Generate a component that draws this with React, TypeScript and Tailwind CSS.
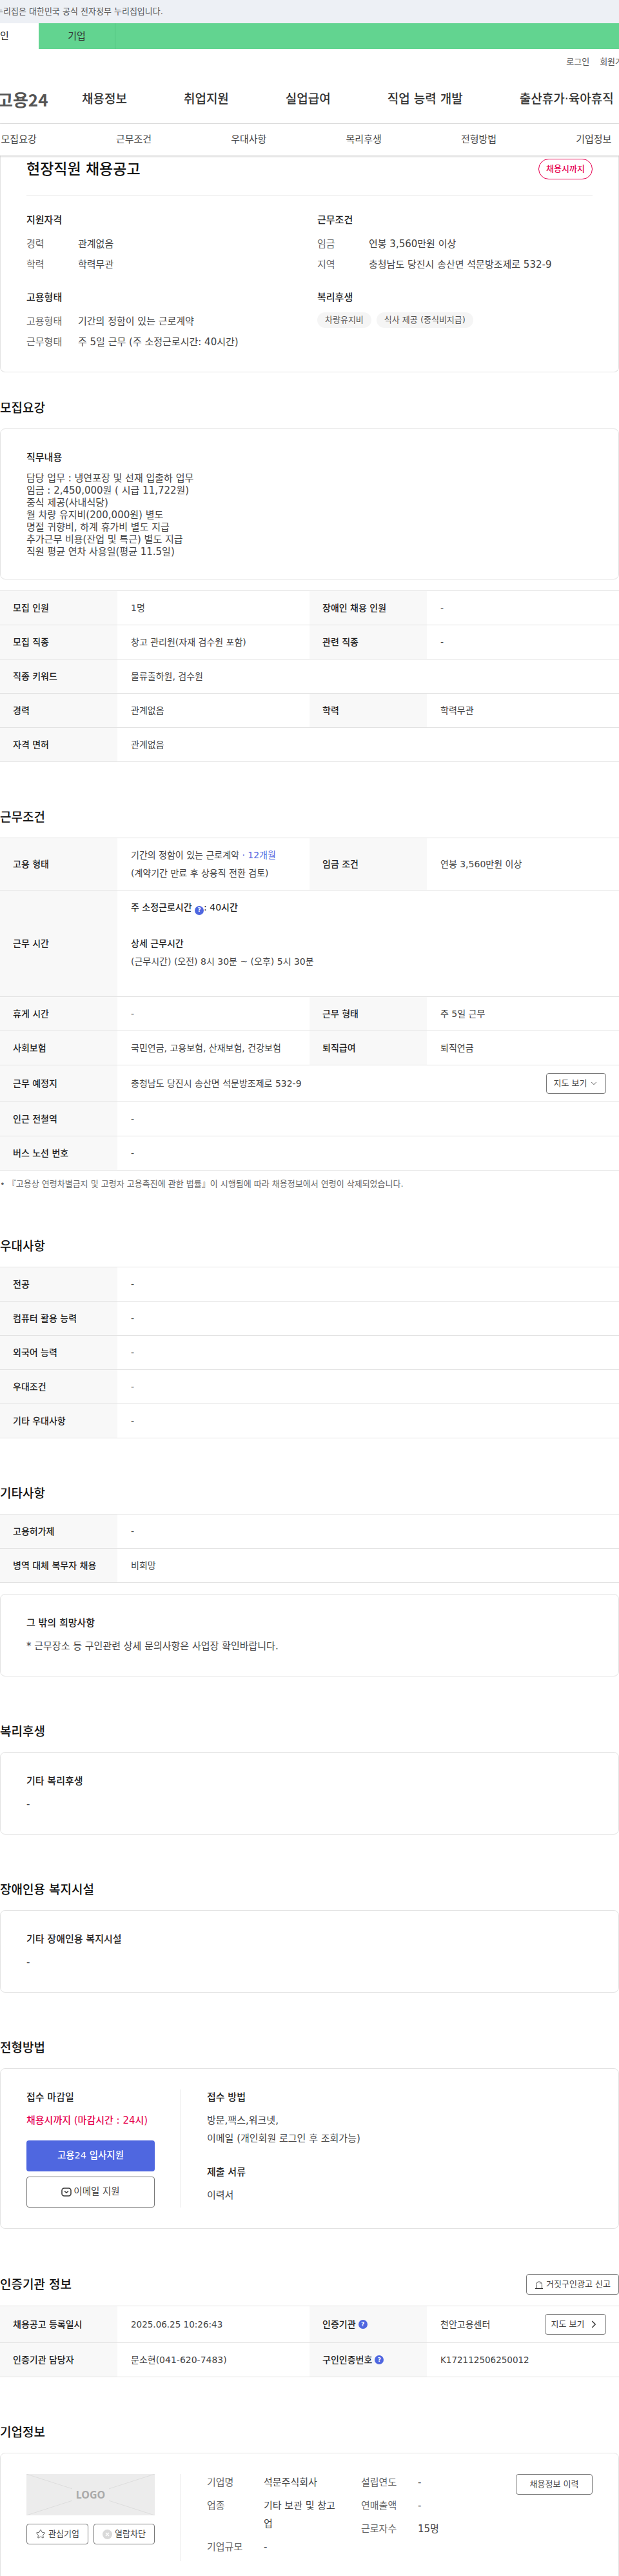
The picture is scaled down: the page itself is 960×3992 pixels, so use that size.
import { ChevronDown, ChevronRight, Star } from 'lucide-react';
import type { ReactNode } from 'react';

const tabs = ['모집요강', '근무조건', '우대사항', '복리후생', '전형방법', '기업정보'];
const gnb = ['채용정보', '취업지원', '실업급여', '직업 능력 개발', '출산휴가·육아휴직'];

type Cell = [ReactNode, ReactNode];

const Help = () => (
  <span className="w-[14px] h-[14px] inline-flex items-center justify-center rounded-full bg-[#4f67e0] text-white text-[9px] leading-none align-[-2px] font-bold">?</span>
);

const Heading = ({ children }: { children: ReactNode }) => (
  <h2 className="text-[19px] leading-[28px] font-medium text-[#111] mb-[18px]">{children}</h2>
);

const Box = ({ children, className = '' }: { children: ReactNode; className?: string }) => (
  <div className={`border border-[#e2e2e2] rounded-lg px-10 py-8 ${className}`}>{children}</div>
);

const BoxBlock = ({ title, text }: { title: string; text: string }) => (
  <Box>
    <h3 className="text-[15px] leading-6 font-medium text-[#222] mb-[10px]">{title}</h3>
    <p className="text-[15px] leading-7 text-[#444]">{text}</p>
  </Box>
);

const Label = ({ children }: { children: ReactNode }) => (
  <div className="w-[182px] shrink-0 bg-[#f8f8f8] pl-5 pr-2 flex items-center gap-1 text-[14px] font-medium text-[#222]">{children}</div>
);

const Value = ({ children }: { children: ReactNode }) => (
  <div className="flex-1 pl-[21px] pr-5 py-3 flex items-center text-[14px] leading-7 text-[#444]">
    <div className="w-full">{children}</div>
  </div>
);

// one table row, with one or two label/value pairs
const Row = ({ cells }: { cells: Cell[] }) => (
  <div className="flex border-b border-[#e2e2e2]">
    {cells.length === 1 ? (
      <>
        <Label>{cells[0][0]}</Label>
        <Value>{cells[0][1]}</Value>
      </>
    ) : (
      cells.map(([label, value], i) => (
        <div key={i} className="flex w-[480px]">
          <Label>{label}</Label>
          <Value>{value}</Value>
        </div>
      ))
    )}
  </div>
);

const Table = ({ children }: { children: ReactNode }) => (
  <div className="border-t border-[#e2e2e2]">{children}</div>
);

const SmallButton = ({ children, className = '' }: { children: ReactNode; className?: string }) => (
  <button className={`h-8 border border-[#777] rounded-[4px] inline-flex items-center justify-center text-[13px] text-[#444] bg-white shrink-0 ${className}`}>{children}</button>
);

const Info = ({ label, value }: { label: string; value: string }) => (
  <div className="flex h-6 items-center text-[15px] whitespace-nowrap">
    <span className="w-[80px] text-[#666]">{label}</span>
    <span className="text-[#444]">{value}</span>
  </div>
);

const CompanyInfo = ({ label, value, width }: { label: string; value: string; width: string }) => (
  <div className="flex text-[15px] leading-[28px] mb-2">
    <span className="w-[88px] shrink-0 text-[#666]">{label}</span>
    <span className={`${width} text-[#444]`}>{value}</span>
  </div>
);

export default function App() {
  return (
    <div className="w-[960px] overflow-hidden bg-white font-['DejaVu_Sans','Noto_Sans_CJK_KR',sans-serif] text-[#444]">
      {/* government banner */}
      <div className="h-9 bg-[#edf0f5] flex items-center text-[13px] text-[#555]">
        <span className="-ml-[7px] whitespace-nowrap">누리집은 대한민국 공식 전자정부 누리집입니다.</span>
      </div>

      {/* user type tabs */}
      <div className="h-10 bg-[#62d490] flex -ml-[60px] text-[15px]">
        <div className="w-[120px] bg-white text-[#222] flex items-center justify-center">개인</div>
        <div className="w-[119px] border-r border-[#52c580] text-[#333] flex items-center justify-center">기업</div>
      </div>

      <div className="h-10 flex items-center gap-4 justify-end -mr-[18px] text-[13px] text-[#555] whitespace-nowrap">
        <span>로그인</span>
        <span>회원가입</span>
      </div>

      {/* main nav */}
      <div className="h-[76px] flex items-center border-b border-[#e5e5e5] whitespace-nowrap">
        <div className="w-[131px] -ml-[4px] shrink-0 font-['Noto_Sans_CJK_KR',sans-serif] text-[26px] font-bold text-[#555]">고용24</div>
        <div className="flex gap-[88px] text-[19px] font-medium text-[#333]">
          {gnb.map((g) => <span key={g}>{g}</span>)}
        </div>
      </div>

      {/* section tabs */}
      <div className="relative z-10 h-[49px] bg-white shadow-[0_1px_3px_rgba(0,0,0,0.25)]">
        <div className="-ml-[60px] w-[1070px] h-full grid grid-cols-6 items-center text-center text-[15px] text-[#444]">
          {tabs.map((t) => <span key={t}>{t}</span>)}
        </div>
      </div>

      {/* summary card */}
      <div className="border-x border-b border-[#e2e2e2] rounded-b-lg px-10 pt-[5px] pb-[34px]">
        <div className="flex justify-between border-b border-[#eaeaea] pb-6">
          <h1 className="text-[23px] leading-8 font-medium text-[#111]">현장직원 채용공고</h1>
          <span className="w-[84px] h-8 rounded-full border border-[#e6004f] text-[#e6004f] text-[13px] font-medium flex items-center justify-center">채용시까지</span>
        </div>
        <div className="flex mt-[26px]">
          <div className="w-[451px]">
            <h3 className="text-[15px] leading-6 font-medium text-[#222] mb-[13px]">지원자격</h3>
            <div className="flex flex-col gap-2">
              <Info label="경력" value="관계없음" />
              <Info label="학력" value="학력무관" />
            </div>
            <h3 className="text-[15px] leading-6 font-medium text-[#222] mt-[27px] mb-[13px]">고용형태</h3>
            <div className="flex flex-col gap-2">
              <Info label="고용형태" value="기간의 정함이 있는 근로계약" />
              <Info label="근무형태" value="주 5일 근무 (주 소정근로시간: 40시간)" />
            </div>
          </div>
          <div>
            <h3 className="text-[15px] leading-6 font-medium text-[#222] mb-[13px]">근무조건</h3>
            <div className="flex flex-col gap-2">
              <Info label="임금" value="연봉 3,560만원 이상" />
              <Info label="지역" value="충청남도 당진시 송산면 석문방조제로 532-9" />
            </div>
            <h3 className="text-[15px] leading-6 font-medium text-[#222] mt-[27px] mb-[11px]">복리후생</h3>
            <div className="flex gap-2 text-[13px] text-[#555]">
              <span className="h-6 px-3 rounded-full bg-[#f5f5f5] flex items-center">차량유지비</span>
              <span className="h-6 px-3 rounded-full bg-[#f5f5f5] flex items-center">식사 제공 (중식비지급)</span>
            </div>
          </div>
        </div>
      </div>

      {/* 모집요강 */}
      <section className="mt-[41px]">
        <Heading>모집요강</Heading>
        <Box>
          <h3 className="text-[15px] leading-6 font-medium text-[#222] mb-[11px]">직무내용</h3>
          <p className="text-[15px] leading-[19px] text-[#444] whitespace-pre-line">{`담당 업무 : 냉연포장 및 선재 입출하 업무
임금 : 2,450,000원 ( 시급 11,722원)
중식 제공(사내식당)
월 차량 유지비(200,000원) 별도
명절 귀향비, 하계 휴가비 별도 지급
추가근무 비용(잔업 및 특근) 별도 지급
직원 평균 연차 사용일(평균 11.5일)`}</p>
        </Box>
        <div className="mt-[17px]">
          <Table>
            <Row cells={[['모집 인원', '1명'], ['장애인 채용 인원', '-']]} />
            <Row cells={[['모집 직종', '창고 관리원(자재 검수원 포함)'], ['관련 직종', '-']]} />
            <Row cells={[['직종 키워드', '물류출하원, 검수원']]} />
            <Row cells={[['경력', '관계없음'], ['학력', '학력무관']]} />
            <Row cells={[['자격 면허', '관계없음']]} />
          </Table>
        </div>
      </section>

      {/* 근무조건 */}
      <section className="mt-[71px]">
        <Heading>근무조건</Heading>
        <Table>
          <Row
            cells={[
              ['고용 형태', <>기간의 정함이 있는 근로계약 <span className="text-[#4f67e0]">· 12개월</span><br />(계약기간 만료 후 상용직 전환 검토)</>],
              ['임금 조건', '연봉 3,560만원 이상'],
            ]}
          />
          <Row
            cells={[[
              '근무 시간',
              <>
                <span className="font-medium text-[#222]">주 소정근로시간 <Help />: 40시간</span><br /><br />
                <span className="font-medium text-[#222]">상세 근무시간</span><br />
                (근무시간) (오전) 8시 30분 ~ (오후) 5시 30분<br /><br />
              </>,
            ]]}
          />
          <Row cells={[['휴게 시간', '-'], ['근무 형태', '주 5일 근무']]} />
          <Row cells={[['사회보험', '국민연금, 고용보험, 산재보험, 건강보험'], ['퇴직급여', '퇴직연금']]} />
          <Row
            cells={[[
              '근무 예정지',
              <div className="flex justify-between items-center">
                <span>충청남도 당진시 송산면 석문방조제로 532-9</span>
                <SmallButton className="w-[93px] gap-1">지도 보기 <ChevronDown size={14} strokeWidth={1.5} /></SmallButton>
              </div>,
            ]]}
          />
          <Row cells={[['인근 전철역', '-']]} />
          <Row cells={[['버스 노선 번호', '-']]} />
        </Table>
        <p className="mt-[11px] text-[13px] leading-5 text-[#666]">• 『고용상 연령차별금지 및 고령자 고용촉진에 관한 법률』이 시행됨에 따라 채용정보에서 연령이 삭제되었습니다.</p>
      </section>

      {/* 우대사항 */}
      <section className="mt-[72px]">
        <Heading>우대사항</Heading>
        <Table>
          <Row cells={[['전공', '-']]} />
          <Row cells={[['컴퓨터 활용 능력', '-']]} />
          <Row cells={[['외국어 능력', '-']]} />
          <Row cells={[['우대조건', '-']]} />
          <Row cells={[['기타 우대사항', '-']]} />
        </Table>
      </section>

      {/* 기타사항 */}
      <section className="mt-[71px]">
        <Heading>기타사항</Heading>
        <Table>
          <Row cells={[['고용허가제', '-']]} />
          <Row cells={[['병역 대체 복무자 채용', '비희망']]} />
        </Table>
        <div className="mt-[17px]">
          <BoxBlock title="그 밖의 희망사항" text="* 근무장소 등 구인관련 상세 문의사항은 사업장 확인바랍니다." />
        </div>
      </section>

      <section className="mt-[71px]">
        <Heading>복리후생</Heading>
        <BoxBlock title="기타 복리후생" text="-" />
      </section>

      <section className="mt-[71px]">
        <Heading>장애인용 복지시설</Heading>
        <BoxBlock title="기타 장애인용 복지시설" text="-" />
      </section>

      {/* 전형방법 */}
      <section className="mt-[71px]">
        <Heading>전형방법</Heading>
        <Box className="flex">
          <div className="w-[240px] pr-10 border-r border-[#e5e5e5] shrink-0">
            <h3 className="text-[15px] leading-6 font-medium text-[#222] mb-[10px]">접수 마감일</h3>
            <p className="text-[15px] leading-7 font-medium text-[#e6004f] whitespace-nowrap">채용시까지 (마감시간 : 24시)</p>
            <button className="mt-[17px] w-[199px] h-12 rounded-[4px] bg-[#4f67e0] text-white text-[14.5px] font-medium">고용24 입사지원</button>
            <button className="mt-2 w-[199px] h-12 rounded-[4px] border border-[#777] text-[14.5px] text-[#444] flex items-center justify-center gap-[3px]">
              <svg width="16" height="14" viewBox="0 0 16 14" fill="none" stroke="#333" strokeWidth="1.5">
                <rect x="1" y="1" width="14" height="12" rx="3.5" />
                <path d="M5 5.5l3 2.5 3-2.5" />
              </svg>
              이메일 지원
            </button>
          </div>
          <div className="pl-10">
            <h3 className="text-[15px] leading-6 font-medium text-[#222] mb-[10px]">접수 방법</h3>
            <p className="text-[15px] leading-7 text-[#444]">방문,팩스,워크넷,<br />이메일 (개인회원 로그인 후 조회가능)</p>
            <h3 className="text-[15px] leading-6 font-medium text-[#222] mt-[26px] mb-[10px]">제출 서류</h3>
            <p className="text-[15px] leading-7 text-[#444]">이력서</p>
          </div>
        </Box>
      </section>

      {/* 인증기관 정보 */}
      <section className="mt-[70px]">
        <div className="flex justify-between items-center mb-[17px]">
          <h2 className="text-[19px] leading-[28px] font-medium text-[#111]">인증기관 정보</h2>
          <SmallButton className="w-[144px] gap-1">
            <svg width="14" height="13" viewBox="0 0 14 13" fill="none" stroke="#333" strokeWidth="1">
              <path d="M1 12.5h12M2.5 12.5V6.5a4.5 4.5 0 0 1 9 0v6" />
              <path d="M8.5 4l.5.8" />
            </svg>
            거짓구인광고 신고
          </SmallButton>
        </div>
        <Table>
          <Row
            cells={[
              ['채용공고 등록일시', <span className="text-[13.5px]">2025.06.25 10:26:43</span>],
              [
                <>인증기관 <Help /></>,
                <div className="flex justify-between items-center">
                  <span>천안고용센터</span>
                  <SmallButton className="w-[95px] gap-[6px]">지도 보기 <ChevronRight size={18} strokeWidth={2.2} /></SmallButton>
                </div>,
              ],
            ]}
          />
          <Row cells={[['인증기관 담당자', '문소현(041-620-7483)'], [<>구인인증번호 <Help /></>, <span className="text-[13.5px]">K172112506250012</span>]]} />
        </Table>
      </section>

      {/* 기업정보 */}
      <section className="mt-[71px]">
        <Heading>기업정보</Heading>
        <Box className="flex">
          <div className="w-[240px] pr-10 border-r border-[#e5e5e5] shrink-0">
            <div className="relative h-16 bg-[#ececec] flex items-center justify-center">
              <svg className="absolute inset-0" width="199" height="64" viewBox="0 0 199 64" stroke="#ddd">
                <path d="M0 0L199 64M199 0L0 64" />
              </svg>
              <span className="relative px-[6px] bg-[#ececec] font-['Noto_Sans',sans-serif] text-[16px] font-bold text-[#aaa]">LOGO</span>
            </div>
            <div className="flex justify-between mt-[13px]">
              <SmallButton className="w-[96px] gap-1"><Star size={16} strokeWidth={1.3} />관심기업</SmallButton>
              <SmallButton className="w-[95px] gap-1">
                <svg width="15" height="15" viewBox="0 0 15 15">
                  <circle cx="7.5" cy="7.5" r="7.5" fill="#d9d9d9" />
                  <path d="M5 5l5 5M10 5l-5 5" stroke="#fff" strokeWidth="1.4" />
                </svg>
                열람차단
              </SmallButton>
            </div>
          </div>
          <div className="pl-10 flex flex-1 -mt-px">
            <div className="w-[239px]">
              <CompanyInfo label="기업명" value="석문주식회사" width="w-[112px]" />
              <CompanyInfo label="업종" value="기타 보관 및 창고업" width="w-[112px]" />
              <CompanyInfo label="기업규모" value="-" width="w-[112px]" />
            </div>
            <div className="flex-1">
              <CompanyInfo label="설립연도" value="-" width="" />
              <CompanyInfo label="연매출액" value="-" width="" />
              <CompanyInfo label="근로자수" value="15명" width="" />
            </div>
            <SmallButton className="w-[119px] mt-px">채용정보 이력</SmallButton>
          </div>
        </Box>
      </section>
    </div>
  );
}
